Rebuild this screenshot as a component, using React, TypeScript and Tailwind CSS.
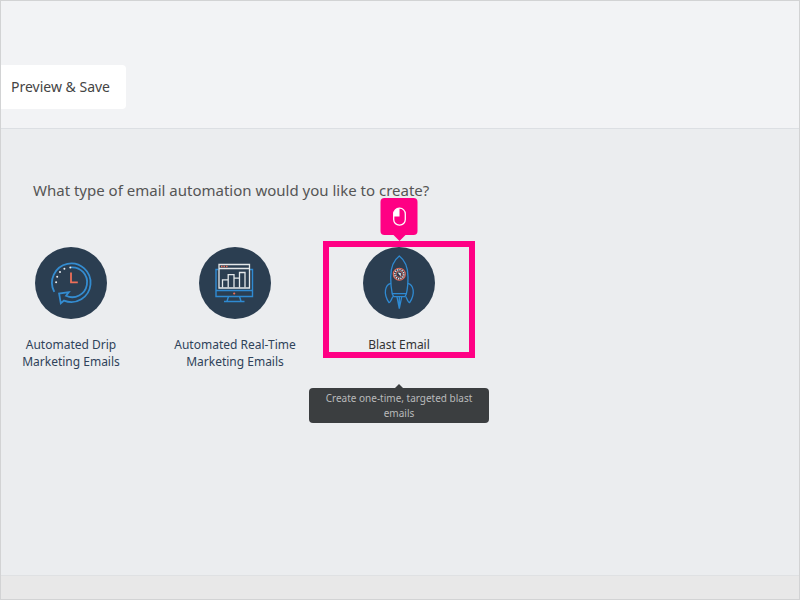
import { useState } from "react";

function DripIcon() {
  return (
    <svg viewBox="0 0 72 72" className="h-[72px] w-[72px]" fill="none" aria-hidden="true">
      <circle cx="36" cy="36" r="36" fill="#2b3e51" />
      <g stroke="#348cd0" strokeWidth="1.8">
        <path d="M19.3 44.9 A19.3 19.3 0 1 1 29 53.6 L25.8 56.3 L24.1 46.5 L33.8 45.2 L31 48.8 A14.9 14.9 0 1 0 36 20.4" />
      </g>
      <path d="M36 25.5 V35.3 H42.8" stroke="#ee6f59" strokeWidth="1.8" />
      <g fill="#e9edf0">
        <circle cx="21.1" cy="35.3" r="1" />
        <circle cx="22.2" cy="29.8" r="1" />
        <circle cx="25" cy="25.1" r="1" />
        <circle cx="29.4" cy="21.8" r="1" />
        <circle cx="35.3" cy="20.4" r="1" />
      </g>
    </svg>
  );
}

function RealTimeIcon() {
  return (
    <svg viewBox="0 0 72 72" className="h-[72px] w-[72px]" fill="none" aria-hidden="true">
      <circle cx="36" cy="36" r="36" fill="#2b3e51" />
      <g stroke="#2f8ad2" strokeWidth="1.4">
        <path d="M19.5 22.5 H17 V49.5 H53.5 V22.5 H50.5" />
        <path d="M17 43.5 H53.5" />
        <path d="M29.5 49.5 L28 54.3 M40.5 49.5 L42 54.3 M25 54.5 H45.5" />
      </g>
      <path d="M20 41 V17.5 H50.5 V41 Z M20 21.5 H50.5" stroke="#e4e8ea" strokeWidth="1.3" />
      <path
        d="M23.5 40.5 V32.8 H29.2 V40.5 M29.2 33 V27.7 H35 V40.5 M35 31.2 H40.5 V40.5 M40.5 31.5 V25.5 H46 V40.5"
        stroke="#e4e8ea"
        strokeWidth="1.3"
      />
      <path d="M22 19.5 h1.5 m1 0 h1.5 m1 0 h1.5" stroke="#ee6f59" strokeWidth="1.4" />
      <circle cx="35.2" cy="46.5" r="1.1" fill="#ee6f59" />
    </svg>
  );
}

function RocketIcon() {
  return (
    <svg viewBox="0 0 72 72" className="h-[72px] w-[72px]" fill="none" aria-hidden="true">
      <circle cx="36" cy="36" r="36" fill="#2b3e51" />
      <g stroke="#2f8ad2" strokeWidth="1.3">
        <path d="M36.3 9 C31 13 27.7 21 27.7 30 C27.7 37 28.2 42 29.2 46.7 H43.4 C44.5 42 45 37 45 30 C45 21 41.6 13 36.3 9 Z" />
        <path d="M29.2 46.7 L30.6 49.6 H42 L43.4 46.7" />
        <path d="M28 36.3 C22.2 37.5 19.8 46.5 26 55.6 C27.6 55.6 28.4 52.5 29.8 49.5" />
        <path d="M44.7 36.3 C50.5 37.5 52.8 46.5 46.6 55.6 C45 55.6 44.2 52.5 42.8 49.5" />
        <path d="M34 49.8 L36.3 61.5 L38.7 49.8 M36.3 50 V61" />
      </g>
      <circle cx="36.3" cy="27.2" r="6" stroke="#e26a5b" strokeWidth="1.1" />
      <circle cx="36.3" cy="27.2" r="4.5" stroke="#e4e8ea" strokeWidth="1.5" strokeDasharray="1.3 1" />
      <circle cx="36.3" cy="27.2" r="3.2" stroke="#e26a5b" strokeWidth="0.8" />
      <path d="M34.7 25.6 L37.8 26 V29.6 L36.6 28 Z" fill="#e4e8ea" />
    </svg>
  );
}

function MouseIcon() {
  return (
    <svg viewBox="0 0 14 20" className="h-5 w-3.5" fill="none" aria-hidden="true">
      <path d="M7 1 A5.8 5.8 0 0 0 1.2 6.8 V9.5 H7 Z" fill="#fff" />
      <rect x="1.2" y="1.2" width="11.6" height="17" rx="5.6" stroke="#fff" strokeWidth="1.3" />
    </svg>
  );
}

const types = [
  { id: "drip", lines: ["Automated Drip", "Marketing Emails"], Icon: DripIcon },
  { id: "realtime", lines: ["Automated Real-Time", "Marketing Emails"], Icon: RealTimeIcon },
  { id: "blast", lines: ["Blast Email"], Icon: RocketIcon },
];

function ClickMarker() {
  return (
    <div className="pointer-events-none absolute -inset-x-[6px] -top-[6px] h-[117px] border-[6px] border-[#ff0084]">
      <div className="absolute -top-[49px] left-1/2 flex h-[37px] w-[37px] -translate-x-1/2 items-center justify-center rounded bg-[#ff0084]">
        <MouseIcon />
        <span className="absolute top-full border-x-[6px] border-t-[6px] border-x-transparent border-t-[#ff0084]" />
      </div>
    </div>
  );
}

function App() {
  const [selected, setSelected] = useState("blast");

  return (
    <div className="flex min-h-screen flex-col border border-[#d2d3d4] bg-[#ebedef] font-['Noto_Sans',sans-serif]">
      <header className="border-b border-[#dcdfe3] bg-[#f2f3f5] pt-16 pb-[19px]">
        <button
          type="button"
          className="h-11 rounded-r bg-white pr-4 pb-0.5 pl-2.5 text-[14px] text-[#444]"
        >
          Preview &amp; Save
        </button>
      </header>

      <main className="flex-1 pt-[49px]">
        <h1 className="pl-8 text-[15px] leading-6 text-[#555]">
          What type of email automation would you like to create?
        </h1>
        <div className="mt-[45px] flex items-start gap-6">
          {types.map(({ id, lines, Icon }) => (
            <div key={id} className="relative w-[140px]">
              <button
                type="button"
                aria-describedby={id === selected ? "type-tip" : undefined}
                onClick={() => setSelected(id)}
                className="flex w-full cursor-pointer flex-col items-center"
              >
                <Icon />
                <span
                  className={`mt-[17px] text-[12px] leading-[17px] whitespace-nowrap ${
                    id === selected ? "text-[#333]" : "text-[#2f435a]"
                  }`}
                >
                  {lines.map((line) => (
                    <span key={line} className="block">
                      {line}
                    </span>
                  ))}
                </span>
              </button>
              {id === selected && (
                <>
                  <ClickMarker />
                  <div
                    id="type-tip"
                    role="tooltip"
                    className="absolute top-[141px] -right-5 -left-5 rounded bg-[#3b3e40] px-3 pt-[3px] pb-[2px] text-center text-[10px] leading-[15px] text-[#b9babb]"
                  >
                    <span className="absolute bottom-full left-1/2 -translate-x-1/2 border-x-4 border-b-4 border-x-transparent border-b-[#3b3e40]" />
                    Create one-time, targeted blast emails
                  </div>
                </>
              )}
            </div>
          ))}
        </div>
      </main>

      <footer className="h-6 border-t border-[#dfe1e3] bg-[#e8e8e8]" />
    </div>
  );
}

export default App;
